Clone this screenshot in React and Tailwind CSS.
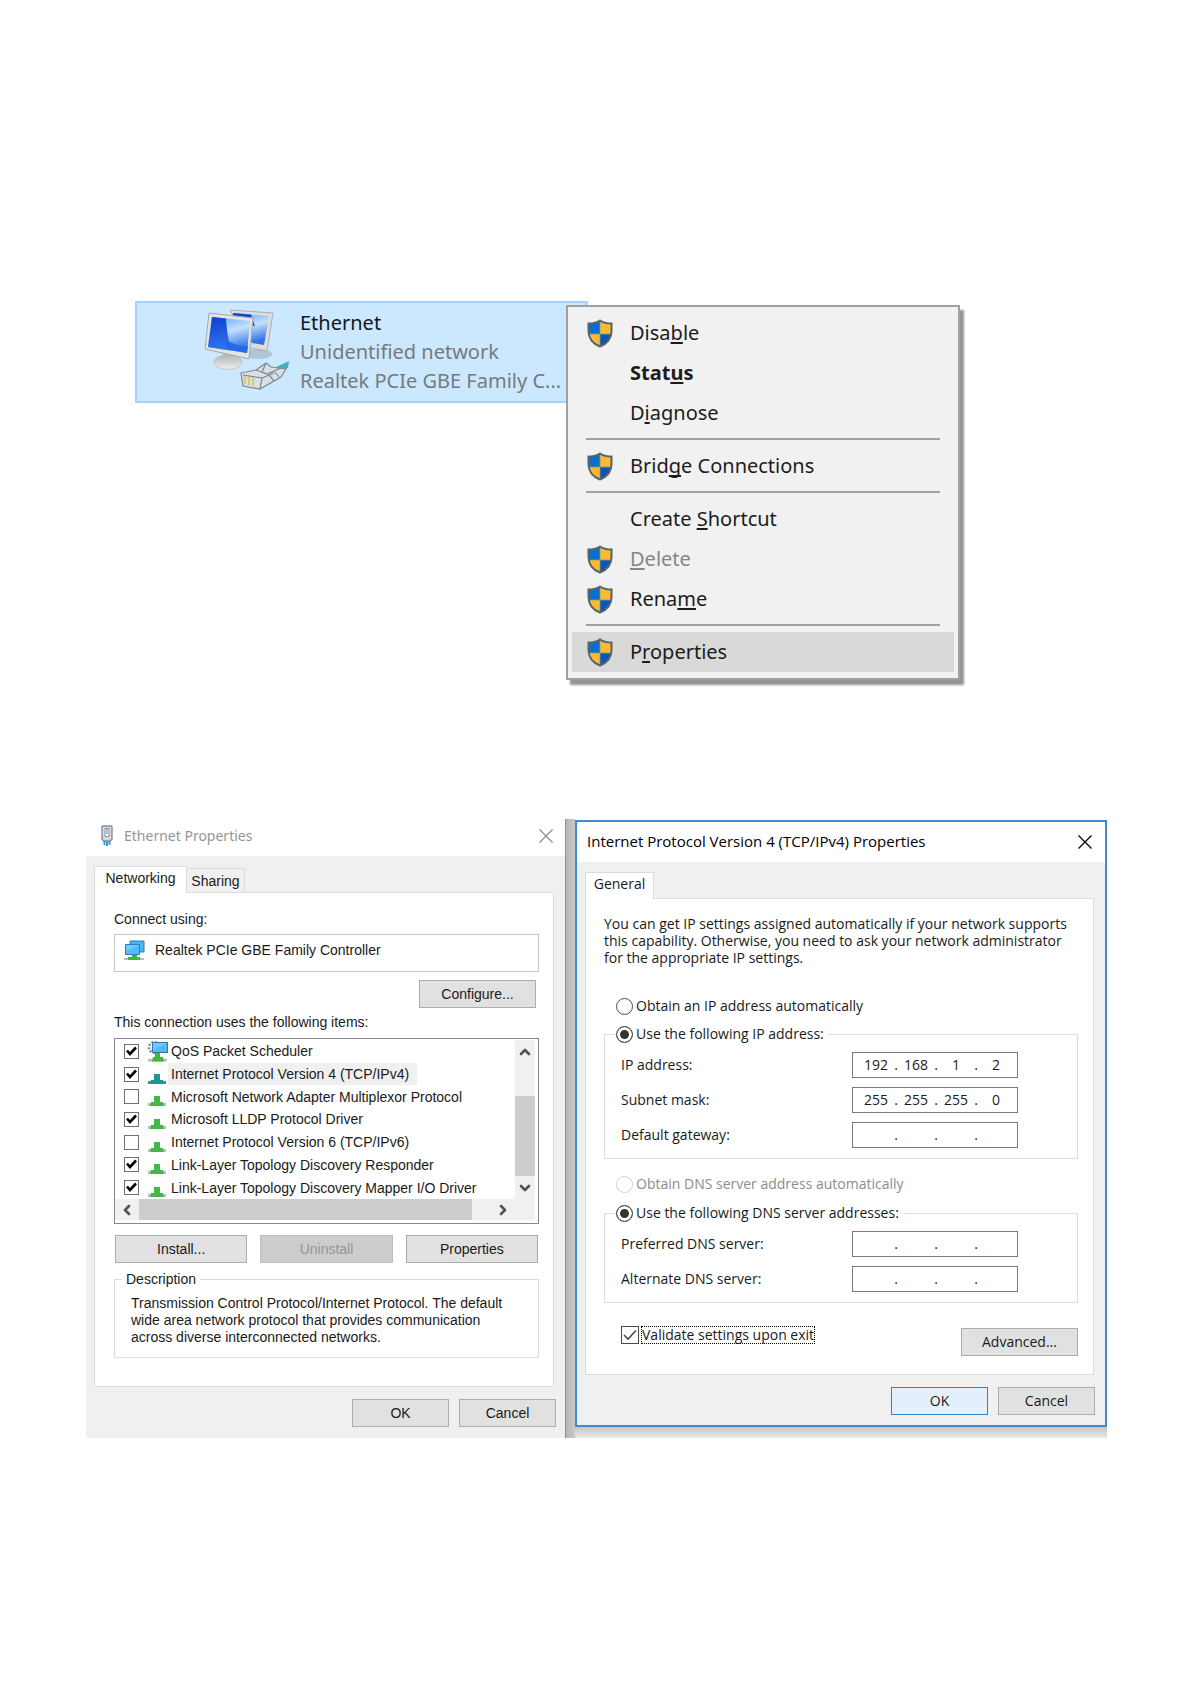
import { ChevronDown, ChevronLeft, ChevronRight, ChevronUp } from 'lucide-react';

const menuGroups = [
  [
    { before: 'Disa', key: 'b', after: 'le', shield: true },
    { before: 'Stat', key: 'u', after: 's', bold: true },
    { before: 'D', key: 'i', after: 'agnose' },
  ],
  [{ before: 'Brid', key: 'g', after: 'e Connections', shield: true }],
  [
    { before: 'Create ', key: 'S', after: 'hortcut' },
    { before: '', key: 'D', after: 'elete', shield: true, disabled: true },
    { before: 'Rena', key: 'm', after: 'e', shield: true },
  ],
  [{ before: 'P', key: 'r', after: 'operties', shield: true, active: true }],
];

const networkItems = [
  { name: 'QoS Packet Scheduler', checked: true, service: true },
  { name: 'Internet Protocol Version 4 (TCP/IPv4)', checked: true, selected: true },
  { name: 'Microsoft Network Adapter Multiplexor Protocol', checked: false },
  { name: 'Microsoft LLDP Protocol Driver', checked: true },
  { name: 'Internet Protocol Version 6 (TCP/IPv6)', checked: false },
  { name: 'Link-Layer Topology Discovery Responder', checked: true },
  { name: 'Link-Layer Topology Discovery Mapper I/O Driver', checked: true },
];

function ShieldIcon() {
  return (
    <svg viewBox="0 0 26 29" className="h-[29px] w-[26px]" aria-hidden="true">
      <clipPath id="shield">
        <path d="M13 1.5C9.5 4 6 4.500 1.500 4.500V12c0 8 5 13 11.500 15.500C19.500 25 24.500 20 24.500 12V4.500C20 4.500 16.500 4 13 1.500z" />
      </clipPath>
      <g clipPath="url(#shield)">
        <rect width="13" height="15" fill="#0b6fd0" />
        <rect x="13" width="13" height="15" fill="#fdb932" />
        <rect y="15" width="13" height="14" fill="#fdb932" />
        <rect x="13" y="15" width="13" height="14" fill="#0a57b5" />
        <path d="M13 0v29M0 15h26" stroke="#7f9a86" strokeWidth="0.8" />
      </g>
      <path d="M13 1.500C9.500 4 6 4.500 1.500 4.500V12c0 8 5 13 11.500 15.500C19.500 25 24.500 20 24.500 12V4.500C20 4.500 16.500 4 13 1.500z" fill="none" stroke="#59636b" strokeWidth="2" />
    </svg>
  );
}

function NetworkIcon() {
  return (
    <svg viewBox="0 0 86 84" className="h-[84px] w-[86px] shrink-0" aria-hidden="true">
      <defs>
        <linearGradient id="screen" x1="0" y1="0" x2="0.3" y2="1">
          <stop offset="0" stopColor="#5f9df4" />
          <stop offset="0.5" stopColor="#c3e1fd" />
          <stop offset="1" stopColor="#2f72e6" />
        </linearGradient>
        <linearGradient id="glare" x1="0" y1="0" x2="0.2" y2="1">
          <stop offset="0" stopColor="#0a3fd0" />
          <stop offset="1" stopColor="#2f74ee" />
        </linearGradient>
        <linearGradient id="foot" x1="0" y1="0" x2="0" y2="1">
          <stop offset="0" stopColor="#aeb4b8" />
          <stop offset="1" stopColor="#f0f1f0" />
        </linearGradient>
      </defs>
      <ellipse cx="54" cy="46" rx="14" ry="5" fill="#9fb6c4" opacity="0.7" />
      <path d="M26 2l43 3-6 38-16-3z" fill="#dddedb" stroke="#a9b0b3" />
      <path d="M29 5l36 3-5 29-12-2z" fill="url(#screen)" />
      <path d="M29 5l18 1.500 4 12-22-10z" fill="#0d49d8" />
      <path d="M19 44l17 4-1 7H20z" fill="#a3aaae" />
      <ellipse cx="24" cy="54" rx="14" ry="7.500" fill="url(#foot)" stroke="#c3c7c8" />
      <path d="M5 5l44 5-4 41L1 41z" fill="#e3e3df" stroke="#a6aaac" />
      <path d="M8 9l38 4-3 32L4 39z" fill="url(#screen)" />
      <path d="M8 9l14 1.500q1 17 5 32L4 39z" fill="url(#glare)" />
      <path d="M22 40l21 5 1-7q-10 1-22-6z" fill="#2368e4" />
      <path d="M70 60l15-7-1 7-12 4z" fill="#3fb2c0" />
      <path d="M37 65l15-3 10-7 5 4 15 2-5 8-21 12-17-3z" fill="#d9dfe3" stroke="#7e898f" strokeWidth="1.200" />
      <path d="M52 62l11 4 14-6M56 81l2-11-19-3M62 55l-4 9M65 67l5 6M71 64l4 5M58 70l12-5" fill="none" stroke="#7b858c" strokeWidth="1.200" />
      <path d="M41 68v8M45 69v8M49 70v8" stroke="#d5cf69" strokeWidth="2" />
    </svg>
  );
}

function AdapterIcon() {
  return (
    <svg viewBox="0 0 21 21" className="h-[21px] w-[21px] shrink-0" aria-hidden="true">
      <path d="M6 1h14v11H6z" fill="#48b5f5" stroke="#2d7eb4" />
      <path d="M0 18h20v2H0z" fill="#b9bdb9" />
      <path d="M8 15h5v2h3v3H4v-3h4z" fill="#43b53e" />
      <path d="M1.500 4.500h14v10h-14z" fill="#52bdfa" stroke="#2d7eb4" />
      <path d="M2 5h13L2 11z" fill="#8bd5ff" opacity="0.600" />
    </svg>
  );
}

function ServiceIcon() {
  return (
    <svg viewBox="0 0 21 21" className="h-[21px] w-[21px] shrink-0" aria-hidden="true">
      <circle cx="7" cy="6.500" r="5" fill="none" stroke="#8f979c" strokeWidth="3" strokeDasharray="2 1.400" />
      <path d="M1 18h19v2.500H1z" fill="#b9bdb9" />
      <path d="M8 12h5v4h3l1 4.500H5L6 16h2z" fill="#3fb73b" />
      <path d="M5.500 1.500h15v10h-15z" fill="#55b9f5" stroke="#2678b2" />
      <path d="M6 2h14L6 9z" fill="#8bd5ff" opacity="0.600" />
    </svg>
  );
}

function ProtocolIcon({ selected }) {
  const color = selected ? '#259494' : '#45b649';
  return (
    <svg viewBox="0 0 21 21" className="h-[21px] w-[21px] shrink-0" aria-hidden="true">
      <path d="M1 17h18v3H1z" fill={selected ? '#3c8fae' : '#b5c4b3'} />
      <path d="M7 10h6v6h3l1 4H3l1-4h3z" fill={color} />
    </svg>
  );
}

function PlugIcon() {
  return (
    <svg viewBox="0 0 12 22" className="h-[22px] w-3 shrink-0" aria-hidden="true">
      <path d="M2 1h8q1 0 1 1v12l-1.500 2h-7L1 14V2q0-1 1-1z" fill="#d6dbe3" stroke="#8390a0" strokeWidth="1.400" />
      <path d="M4 3.500h4v8H4z" fill="#fff" stroke="#8390a0" />
      <path d="M6 4v5" stroke="#778" />
      <path d="M3.500 16v4M6 16v5M8.500 16v4" stroke="#3c9bd6" strokeWidth="2" />
    </svg>
  );
}

function CloseButton({ className }) {
  return (
    <button type="button" aria-label="Close" className={className}>
      <svg viewBox="0 0 14 14" className="h-3.5 w-3.5" fill="none" stroke="currentColor" strokeWidth="1.300">
        <path d="M0.500 0.500l13 13M13.500 0.500l-13 13" />
      </svg>
    </button>
  );
}

function ContextMenu() {
  return (
    <div
      role="menu"
      className="relative -ml-[22px] mt-1 w-[394px] shrink-0 border-2 border-[#a0a0a0] bg-[#f1f1f1] px-1 py-1.5 shadow-[4px_5px_2px_0px_#949494]"
    >
      {menuGroups.map((group, index) => (
        <div key={index}>
          {index > 0 && <hr className="mx-3.5 my-[5px] h-[3px] border-0 border-b border-[#f1f1f1] bg-[#a0a0a0]" />}
          {group.map((item) => (
            <button
              key={item.before + item.key}
              type="button"
              role="menuitem"
              disabled={item.disabled}
              className={`grid h-10 w-full grid-cols-[43px_1fr] items-center pl-[15px] text-left text-xl leading-10 ${
                item.active ? 'bg-[#d9d9d9]' : ''
              } ${item.bold ? 'font-bold' : ''} ${item.disabled ? 'text-[#868686]' : 'text-[#1c1c1c]'}`}
            >
              <span>{item.shield && <ShieldIcon />}</span>
              <span>
                {item.before}
                <span className="underline decoration-2 underline-offset-2 [text-decoration-skip-ink:none]">{item.key}</span>
                {item.after}
              </span>
            </button>
          ))}
        </div>
      ))}
    </div>
  );
}

function PushButton({ children, className = '', disabled, primary }) {
  let look = 'border-[#adadad] bg-[#e1e1e1] text-[#1a1a1a]';
  if (disabled) look = 'border-[#bfbfbf] bg-[#cccccc] text-[#969696]';
  if (primary) look = 'border-[#2a86d1] bg-[#e3f0fb] text-[#1a1a1a]';
  return (
    <button type="button" disabled={disabled} className={`h-7 border ${look} ${className}`}>
      {children}
    </button>
  );
}

function ListCheckbox({ id, checked }) {
  return (
    <span className="grid shrink-0">
      <input
        id={id}
        type="checkbox"
        defaultChecked={checked}
        className="peer h-[15px] w-[15px] appearance-none border border-[#707070] bg-white [grid-area:1/1]"
      />
      <svg viewBox="0 0 15 15" className="pointer-events-none invisible h-[15px] w-[15px] [grid-area:1/1] peer-checked:visible">
        <path d="M3 6.500l3 3.500 6-6.500" fill="none" stroke="#000" strokeWidth="2.600" />
      </svg>
    </span>
  );
}

function Radio({ name, label, checked, disabled }) {
  return (
    <label className={`flex h-5 items-center gap-[3px] ${disabled ? 'text-[#8c8c8c]' : ''}`}>
      <input
        type="radio"
        name={name}
        defaultChecked={checked}
        disabled={disabled}
        className="h-[17px] w-[17px] appearance-none rounded-full border border-[#4a4a4a] bg-white shadow-[inset_0_0_0_3px_#fff] checked:bg-[#333] disabled:border-[#cfcfcf]"
      />
      {label}
    </label>
  );
}

function AddressRow({ label, octets = ['', '', '', ''] }) {
  return (
    <div role="group" aria-label={label} className="flex h-[26px] items-center justify-between">
      <span>{label}</span>
      <span className="flex h-[26px] w-[166px] items-center border border-[#7a7a7a] bg-white pl-[5px]">
        {octets.map((octet, index) => (
          <span key={index} className="flex items-center">
            <input
              type="text"
              defaultValue={octet}
              aria-label={`${label} ${index + 1}`}
              className="w-9 bg-transparent text-center"
            />
            <span className="w-1 text-center">{index < 3 ? '.' : ''}</span>
          </span>
        ))}
      </span>
    </div>
  );
}

function ItemList() {
  return (
    <div className="mt-1.5 border border-[#828790] bg-white pb-[3px] pr-[3px] pt-px">
      <div className="flex">
        <ul className="grid h-[159px] min-w-0 flex-1 grid-rows-7 pl-[9px]">
          {networkItems.map((item, index) => (
            <li key={item.name} className="flex min-h-0 items-center whitespace-nowrap">
              <ListCheckbox id={`item-${index}`} checked={item.checked} />
              <span className="ml-2 flex">
                {item.service ? <ServiceIcon /> : <ProtocolIcon selected={item.selected} />}
              </span>
              <label
                htmlFor={`item-${index}`}
                className={`pl-[3px] pr-2 leading-[22px] ${item.selected ? 'bg-[#f0f0f0]' : ''}`}
              >
                {item.name}
              </label>
            </li>
          ))}
        </ul>
        <div className="flex w-5 flex-col items-center bg-[#f0f0f0] text-[#555]">
          <ChevronUp className="my-1 h-4 w-4" strokeWidth={4} />
          <div className="mt-8 h-20 w-5 bg-[#cdcdcd]" />
          <ChevronDown className="mt-1 h-4 w-4" strokeWidth={4} />
        </div>
      </div>
      <div className="flex h-[21px] items-center bg-[#f0f0f0] pl-1 text-[#555]">
        <ChevronLeft className="mr-1 h-4 w-4" strokeWidth={4} />
        <div className="h-[21px] w-[80%] bg-[#cdcdcd]" />
        <ChevronRight className="ml-auto mr-6 h-4 w-4" strokeWidth={4} />
      </div>
    </div>
  );
}

function EthernetDialog() {
  return (
    <section className="flex bg-gradient-to-r from-[#b5b5b5] to-[#c9cbc8] bg-[length:9px_100%] bg-right bg-no-repeat pr-[9px] text-sm text-[#1a1a1a]">
      <div className="flex min-w-0 flex-1 flex-col border-r border-[#8f8f8f] bg-[#f0f0f0]">
        <header className="flex h-[37px] items-center gap-[11px] bg-white pb-1 pl-[15px] pr-3 font-['Noto_Sans',sans-serif] text-[#959595]">
          <PlugIcon />
          <h2>Ethernet Properties</h2>
          <CloseButton className="ml-auto text-[#8d8d8d]" />
        </header>
        <div className="pl-2 pr-[11px] pt-2.5">
          <div role="tablist" className="flex items-end">
            <button
              type="button"
              role="tab"
              aria-selected="true"
              className="relative -mb-px h-[27px] w-[93px] border border-b-0 border-[#dcdcdc] bg-white pb-1 leading-5"
            >
              Networking
            </button>
            <button type="button" role="tab" aria-selected="false" className="h-6 w-[58px] border border-b-0 border-l-0 border-[#dcdcdc]">
              Sharing
            </button>
          </div>
          <div className="border border-[#dcdcdc] bg-white pb-7 pl-[19px] pr-3.5 pt-4">
            <p className="leading-5">Connect using:</p>
            <div className="mt-[5px] flex h-[38px] items-start gap-2.5 border border-[#c9c9c9] pl-[9px] pt-[5px] leading-5">
              <AdapterIcon />
              Realtek PCIe GBE Family Controller
            </div>
            <div className="mt-2 flex justify-end pr-[3px]">
              <PushButton className="w-[117px]">Configure...</PushButton>
            </div>
            <p className="mt-1 leading-5">This connection uses the following items:</p>
            <ItemList />
            <div className="mt-[11px] grid grid-cols-3 gap-[13px] px-px">
              <PushButton>Install...</PushButton>
              <PushButton disabled>Uninstall</PushButton>
              <PushButton>Properties</PushButton>
            </div>
            <fieldset className="mt-1.5 border border-[#dcdcdc] pb-[11px] pl-4">
              <legend className="-ml-[9px] px-1 leading-5">Description</legend>
              <p className="max-w-[380px] pt-1.5 leading-[17px]">
                Transmission Control Protocol/Internet Protocol. The default wide area network protocol that provides
                communication across diverse interconnected networks.
              </p>
            </fieldset>
          </div>
        </div>
        <footer className="flex justify-end gap-2.5 pb-2.5 pr-[9px] pt-3">
          <PushButton className="w-[97px]">OK</PushButton>
          <PushButton className="w-[97px]">Cancel</PushButton>
        </footer>
      </div>
    </section>
  );
}

function ProtocolDialog() {
  return (
    <section className="flex flex-col bg-gradient-to-b from-[#c4c4c4] to-[#e9e9e9] bg-[length:100%_12px] bg-bottom bg-no-repeat pb-[11px] pt-px text-sm text-[#1a1a1a]">
      <div className="flex-1 border-2 border-[#3c8dd0] bg-[#f0f0f0] font-['Open_Sans',sans-serif]">
        <header className="flex h-10 items-center bg-white pl-2.5 pr-[13px] text-[15px] text-black">
          <h2>Internet Protocol Version 4 (TCP/IPv4) Properties</h2>
          <CloseButton className="ml-auto" />
        </header>
        <div className="pl-2 pr-[11px] pt-2.5">
          <div role="tablist" className="flex">
            <button
              type="button"
              role="tab"
              aria-selected="true"
              className="relative -mb-px h-[27px] w-[69px] border border-b-0 border-[#dcdcdc] bg-white pb-1 leading-5"
            >
              General
            </button>
          </div>
          <div className="border border-[#dcdcdc] bg-white pb-[18px] pl-[18px] pr-[15px] pt-4">
            <p className="leading-[17px]">
              You can get IP settings assigned automatically if your network supports
              <br />
              this capability. Otherwise, you need to ask your network administrator
              <br />
              for the appropriate IP settings.
            </p>
            <div className="mt-[30px] pl-3">
              <Radio name="ip" label="Obtain an IP address automatically" />
            </div>
            <fieldset className="mt-2 border border-[#dcdcdc] pb-2.5 pl-4 pr-[59px]">
              <legend className="-ml-[5px] pr-1">
                <Radio name="ip" label="Use the following IP address:" checked />
              </legend>
              <div className="grid gap-[9px] pt-2">
                <AddressRow label="IP address:" octets={['192', '168', '1', '2']} />
                <AddressRow label="Subnet mask:" octets={['255', '255', '255', '0']} />
                <AddressRow label="Default gateway:" />
              </div>
            </fieldset>
            <div className="mt-[15px] pl-3">
              <Radio name="dns" label="Obtain DNS server address automatically" disabled />
            </div>
            <fieldset className="mt-[9px] border border-[#dcdcdc] pb-2.5 pl-4 pr-[59px]">
              <legend className="-ml-[5px] pr-1">
                <Radio name="dns" label="Use the following DNS server addresses:" checked />
              </legend>
              <div className="grid gap-[9px] pt-2">
                <AddressRow label="Preferred DNS server:" />
                <AddressRow label="Alternate DNS server:" />
              </div>
            </fieldset>
            <div className="mt-[23px] flex items-start justify-between pl-[17px]">
              <label className="flex items-center gap-0.5">
                <span className="grid">
                  <input
                    type="checkbox"
                    defaultChecked
                    className="peer h-[18px] w-[18px] appearance-none border border-[#4a4a4a] bg-white [grid-area:1/1]"
                  />
                  <svg
                    viewBox="0 0 18 18"
                    className="pointer-events-none invisible h-[18px] w-[18px] [grid-area:1/1] peer-checked:visible"
                  >
                    <path d="M3 9l4 4 8-8.500" fill="none" stroke="#4a4a4a" strokeWidth="1.600" />
                  </svg>
                </span>
                <span className="border border-dotted border-black leading-4">Validate settings upon exit</span>
              </label>
              <PushButton className="mt-0.5 w-[117px]">Advanced...</PushButton>
            </div>
          </div>
        </div>
        <footer className="flex justify-end gap-2.5 pb-2.5 pr-2.5 pt-3">
          <PushButton primary className="w-[97px]">OK</PushButton>
          <PushButton className="w-[97px]">Cancel</PushButton>
        </footer>
      </div>
    </section>
  );
}

export default function App() {
  return (
    <main className="min-h-screen bg-white pb-[247px] pl-[86px] pr-[83px] pt-[301px] font-['Liberation_Sans',Arial,sans-serif]">
      <div className="flex items-start pl-[49px] font-['Noto_Sans',sans-serif]">
        <div className="flex h-[102px] w-[453px] shrink-0 border-2 border-[#a3d3fc] bg-[#cce8ff] pl-[67px] pt-[5px] text-xl leading-[29px]">
          <NetworkIcon />
          <div className="whitespace-nowrap pl-2.5 text-[#747a80]">
            <h1 className="text-[#101820]">Ethernet</h1>
            <p>Unidentified network</p>
            <p>Realtek PCIe GBE Family C...</p>
          </div>
        </div>
        <ContextMenu />
      </div>
      <div className="mt-[139px] grid grid-cols-[489fr_532fr]">
        <EthernetDialog />
        <ProtocolDialog />
      </div>
    </main>
  );
}
